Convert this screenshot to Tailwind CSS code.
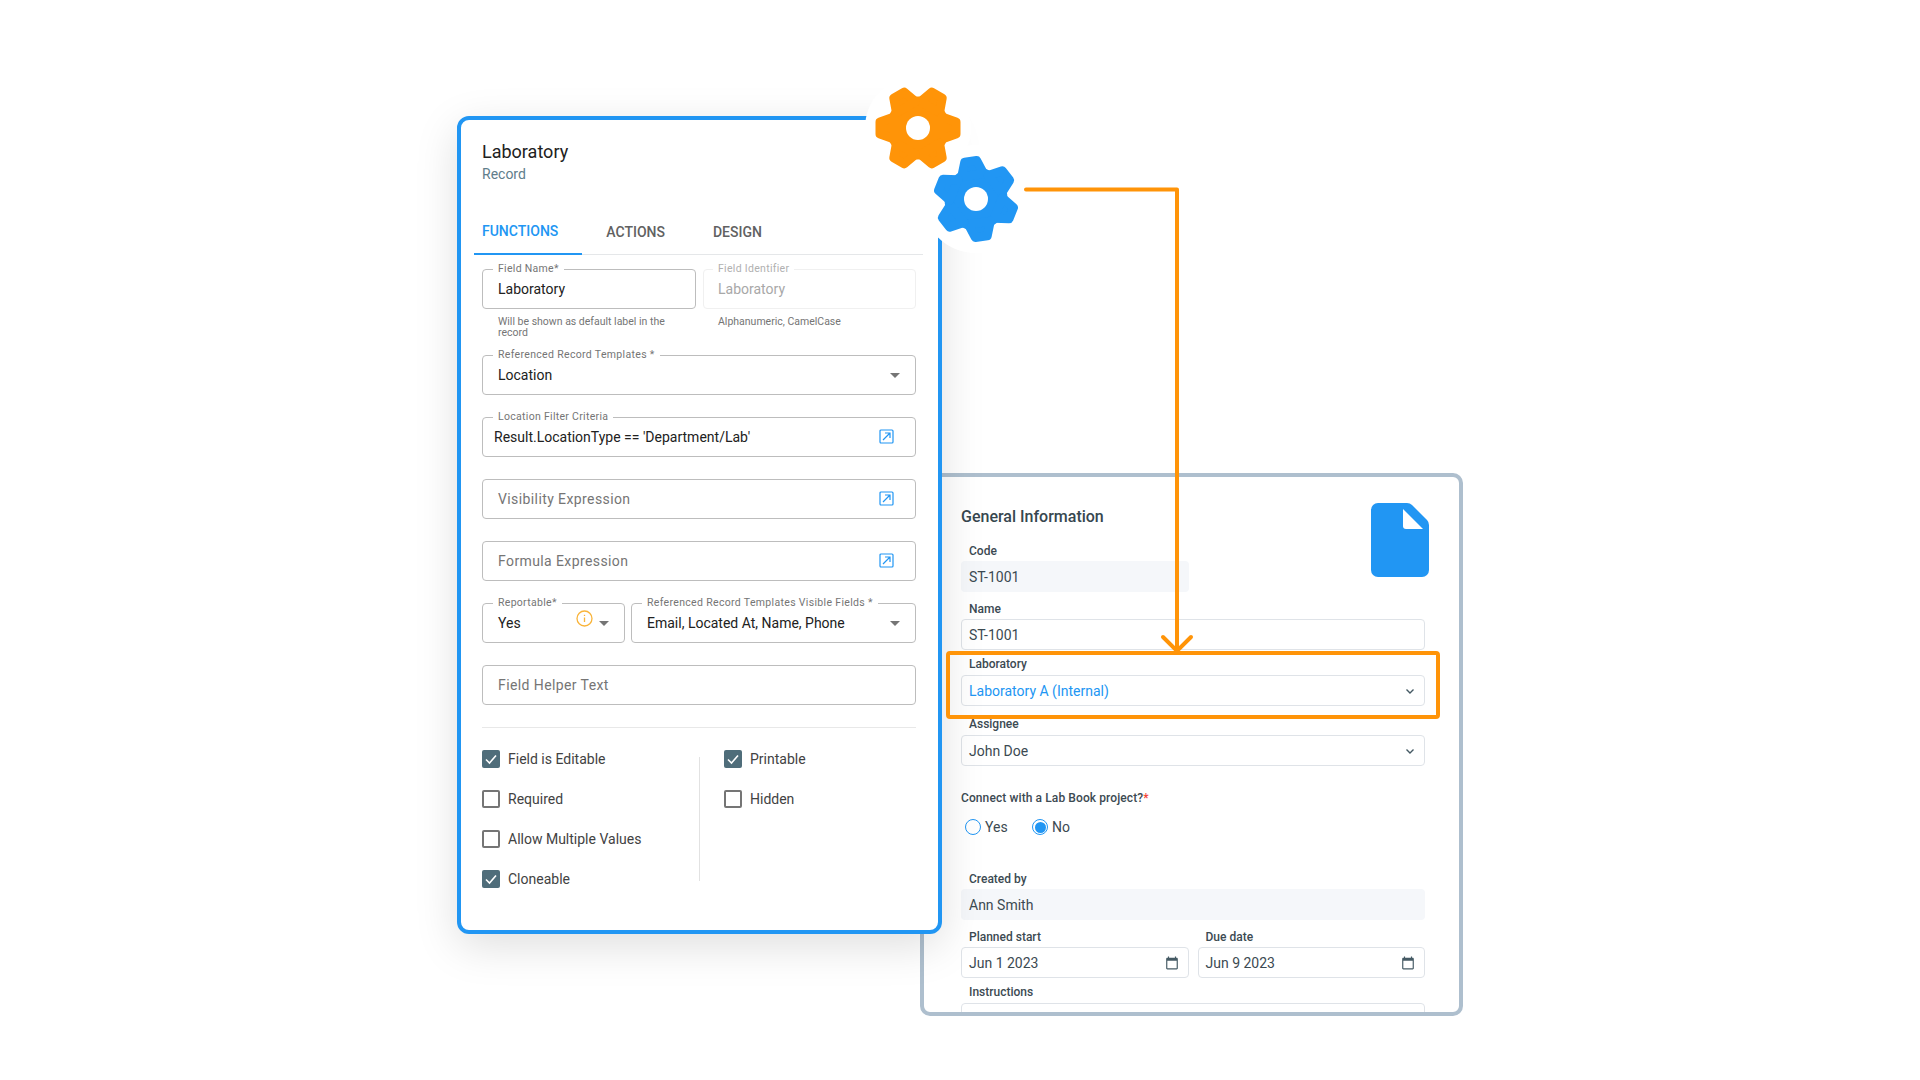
<!DOCTYPE html>
<html lang="en">
<head>
<meta charset="utf-8">
<title>Laboratory</title>
<script src="https://cdn.jsdelivr.net/npm/@tailwindcss/browser@4"></script>
</head>
<body class="bg-white">
<div class="relative w-[1920px] h-[1080px] overflow-hidden bg-white font-['Roboto',sans-serif]">

  <!-- form preview window -->
  <div class="absolute left-[920px] top-[473px] w-[543px] h-[543px] rounded-[10px] border-4 border-[#aebfce] bg-white overflow-hidden pl-[37px] pr-[34px] pt-[28px] text-[#3c4a52]">
    <svg class="absolute right-[30px] top-[26px]" width="58" height="74" viewBox="0 0 58 74">
      <path fill="#2196f3" d="M7 0H36Q39 0 41 2L56 17Q58 19 58 22V67a7 7 0 0 1-7 7H7a7 7 0 0 1-7-7V7a7 7 0 0 1 7-7z"/>
      <path fill="#fff" d="M32 6V23q0 3 3 3H52z"/>
    </svg>
    <h3 class="text-base leading-6 font-medium text-[#37474f]">General Information</h3>

    <div class="mt-[14px] pl-2 text-xs leading-4 font-medium">Code</div>
    <div class="mt-[2px] w-[228px] h-[31px] pl-2 flex items-center rounded bg-[#f5f7fa] text-sm">ST-1001</div>

    <div class="mt-[9px] pl-2 text-xs leading-4 font-medium">Name</div>
    <div class="mt-[2px] h-[31px] pl-[7px] flex items-center rounded border border-[#dfe3e8] text-sm">ST-1001</div>

    <div class="mt-[6px] pl-2 text-xs leading-4 font-medium">Laboratory</div>
    <div class="mt-[3px] h-[31px] pl-[7px] pr-2 flex items-center justify-between rounded border border-[#dfe3e8] text-sm text-[#2196f3]">
      <span>Laboratory A (Internal)</span>
      <svg width="12" height="12" viewBox="0 0 12 12" fill="none" stroke="#455a64" stroke-width="1.4"><path d="M2.5 4.5 6 8l3.5-3.5"/></svg>
    </div>

    <div class="mt-[10px] pl-2 text-xs leading-4 font-medium">Assignee</div>
    <div class="mt-[3px] h-[31px] pl-[7px] pr-2 flex items-center justify-between rounded border border-[#dfe3e8] text-sm">
      <span>John Doe</span>
      <svg width="12" height="12" viewBox="0 0 12 12" fill="none" stroke="#455a64" stroke-width="1.4"><path d="M2.5 4.5 6 8l3.5-3.5"/></svg>
    </div>

    <div class="mt-6 text-xs leading-4 font-medium tracking-[0.1px]">Connect with a Lab Book project?<span class="text-[#f44336]">*</span></div>
    <div class="mt-[11px] h-5 pl-1 flex items-center text-sm">
      <span class="w-4 h-4 rounded-full border border-[#2196f3]"></span>
      <span class="ml-1 w-[47px]">Yes</span>
      <span class="w-4 h-4 rounded-full border border-[#2196f3] flex items-center justify-center"><span class="w-[11px] h-[11px] rounded-full bg-[#2196f3]"></span></span>
      <span class="ml-1">No</span>
    </div>

    <div class="mt-[34px] pl-2 text-xs leading-4 font-medium">Created by</div>
    <div class="mt-[2px] h-[31px] pl-2 flex items-center rounded bg-[#f5f7fa] text-sm">Ann Smith</div>

    <div class="mt-[9px] grid grid-cols-2 gap-x-[9px]">
      <div>
        <div class="pl-2 text-xs leading-4 font-medium">Planned start</div>
        <div class="mt-[2px] h-[31px] pl-[7px] pr-[9px] flex items-center justify-between rounded border border-[#dfe3e8] text-sm">
          <span>Jun 1 2023</span>
          <svg width="14" height="14" viewBox="0 0 24 24" fill="#455a64"><path d="M20 3h-1V1h-2v2H7V1H5v2H4c-1.1 0-2 .9-2 2v16c0 1.1.9 2 2 2h16c1.1 0 2-.9 2-2V5c0-1.1-.9-2-2-2zm0 18H4V8h16v13z"/></svg>
        </div>
      </div>
      <div>
        <div class="pl-2 text-xs leading-4 font-medium">Due date</div>
        <div class="mt-[2px] h-[31px] pl-[7px] pr-[9px] flex items-center justify-between rounded border border-[#dfe3e8] text-sm">
          <span>Jun 9 2023</span>
          <svg width="14" height="14" viewBox="0 0 24 24" fill="#455a64"><path d="M20 3h-1V1h-2v2H7V1H5v2H4c-1.1 0-2 .9-2 2v16c0 1.1.9 2 2 2h16c1.1 0 2-.9 2-2V5c0-1.1-.9-2-2-2zm0 18H4V8h16v13z"/></svg>
        </div>
      </div>
    </div>

    <div class="mt-[6px] pl-2 text-xs leading-4 font-medium">Instructions</div>
    <div class="mt-[3px] h-[31px] rounded border border-[#dfe3e8]"></div>
  </div>

  <!-- field settings window -->
  <div class="absolute left-[457px] top-[116px] w-[485px] h-[818px] rounded-[12px] border-4 border-[#2196f3] bg-white shadow-[0_12px_44px_rgba(0,0,0,0.13)] pl-[21px] pr-[22px] pt-5 text-[#212121]">
    <h2 class="text-lg leading-6">Laboratory</h2>
    <div class="text-sm leading-5 text-[#607d8b]">Record</div>

    <div class="mt-[25px] -ml-2 -mr-[7px] h-[46px] flex border-b border-[#e5e7e9] text-sm font-medium">
      <div class="h-[46px] pl-2 pr-6 flex items-center border-b-2 border-[#2196f3] text-[#2196f3]">FUNCTIONS</div>
      <div class="h-[45px] px-6 flex items-center text-[#616161]">ACTIONS</div>
      <div class="h-[45px] px-6 flex items-center text-[#616161]">DESIGN</div>
    </div>

    <div class="mt-[14px] flex gap-[7px]">
      <div class="w-[214px]">
        <div class="relative h-10 pl-[15px] flex items-center rounded border border-[#bdbdbd] text-sm">
          Laboratory
          <span class="absolute left-[10px] -top-[7px] px-[5px] bg-white text-[10.5px] leading-3 tracking-[0.3px] text-[#757575]">Field Name*</span>
        </div>
        <p class="mt-[7px] pl-4 pr-5 text-[10.5px] leading-[11px] text-[#757575]">Will be shown as default label in the record</p>
      </div>
      <div class="w-[213px]">
        <div class="relative h-10 pl-[14px] flex items-center rounded border border-[#f0f0f0] text-sm text-[#a8a8a8]">
          Laboratory
          <span class="absolute left-[9px] -top-[7px] px-[5px] bg-white text-[10.5px] leading-3 tracking-[0.3px] text-[#b0b0b0]">Field Identifier</span>
        </div>
        <p class="mt-[7px] pl-[15px] text-[10.5px] leading-[11px] text-[#757575]">Alphanumeric, CamelCase</p>
      </div>
    </div>

    <div class="relative mt-[17px] h-10 pl-[15px] pr-[15px] flex items-center justify-between rounded border border-[#bdbdbd] text-sm">
      <span>Location</span>
      <span class="w-0 h-0 border-x-[5px] border-t-[5px] border-x-transparent border-t-[#757575]"></span>
      <span class="absolute left-[10px] -top-[7px] px-[5px] bg-white text-[10.5px] leading-3 tracking-[0.33px] text-[#757575]">Referenced Record Templates *</span>
    </div>

    <div class="relative mt-[22px] h-10 pl-[11px] pr-[21px] flex items-center justify-between rounded border border-[#bdbdbd] text-sm">
      <span>Result.LocationType == 'Department/Lab'</span>
      <svg class="mb-[2px]" width="15" height="15" viewBox="0 0 15 15" fill="none" stroke="#2196f3" stroke-width="1.2"><rect x="1" y="1" width="13" height="13" rx="1"/><path d="M4 11 11 4M6 4h5v5"/></svg>
      <span class="absolute left-[10px] -top-[7px] px-[5px] bg-white text-[10.5px] leading-3 tracking-[0.3px] text-[#757575]">Location Filter Criteria</span>
    </div>

    <div class="mt-[22px] h-10 pl-[15px] pr-[21px] flex items-center justify-between rounded border border-[#bdbdbd] text-sm tracking-[0.4px] text-[#757575]">
      <span>Visibility Expression</span>
      <svg class="mb-[2px]" width="15" height="15" viewBox="0 0 15 15" fill="none" stroke="#2196f3" stroke-width="1.2"><rect x="1" y="1" width="13" height="13" rx="1"/><path d="M4 11 11 4M6 4h5v5"/></svg>
    </div>

    <div class="mt-[22px] h-10 pl-[15px] pr-[21px] flex items-center justify-between rounded border border-[#bdbdbd] text-sm tracking-[0.4px] text-[#757575]">
      <span>Formula Expression</span>
      <svg class="mb-[2px]" width="15" height="15" viewBox="0 0 15 15" fill="none" stroke="#2196f3" stroke-width="1.2"><rect x="1" y="1" width="13" height="13" rx="1"/><path d="M4 11 11 4M6 4h5v5"/></svg>
    </div>

    <div class="mt-[22px] flex gap-[6px]">
      <div class="relative w-[143px] h-10 pl-[15px] pr-[15px] flex items-center rounded border border-[#bdbdbd] text-sm">
        <span class="flex-1">Yes</span>
        <svg class="mb-[10px] mr-[6px]" width="17" height="17" viewBox="0 0 17 17" fill="none" stroke="#f9b43a" stroke-width="1.3"><circle cx="8.5" cy="8.5" r="7.5"/><path d="M8.5 7.5V12M8.5 4.7v1.2"/></svg>
        <span class="w-0 h-0 border-x-[5px] border-t-[5px] border-x-transparent border-t-[#757575]"></span>
        <span class="absolute left-[10px] -top-[7px] px-[5px] bg-white text-[10.5px] leading-3 tracking-[0.3px] text-[#757575]">Reportable*</span>
      </div>
      <div class="relative flex-1 h-10 pl-[15px] pr-[15px] flex items-center justify-between rounded border border-[#bdbdbd] text-sm">
        <span>Email, Located At, Name, Phone</span>
        <span class="w-0 h-0 border-x-[5px] border-t-[5px] border-x-transparent border-t-[#757575]"></span>
        <span class="absolute left-[10px] -top-[7px] px-[5px] bg-white text-[10.5px] leading-3 tracking-[0.33px] text-[#757575] whitespace-nowrap">Referenced Record Templates Visible Fields *</span>
      </div>
    </div>

    <div class="mt-[22px] h-10 pl-[15px] flex items-center rounded border border-[#bdbdbd] text-sm tracking-[0.4px] text-[#757575]">Field Helper Text</div>

    <div class="mt-[22px] border-t border-[#e8e8e8]"></div>

    <div class="mt-[22px] flex text-sm text-[#424242]">
      <div class="w-[217px] flex flex-col gap-[22px]">
        <label class="h-[18px] flex items-center gap-2">
          <span class="w-[18px] h-[18px] rounded-[2px] bg-[#4f6d7a] flex items-center justify-center"><svg width="14" height="14" viewBox="0 0 14 14" fill="none" stroke="#fff" stroke-width="1.6"><path d="M2 7.5 5.5 11 12 3.5"/></svg></span>
          Field is Editable
        </label>
        <label class="h-[18px] flex items-center gap-2">
          <span class="w-[18px] h-[18px] rounded-[2px] border-2 border-[#757575]"></span>
          Required
        </label>
        <label class="h-[18px] flex items-center gap-2">
          <span class="w-[18px] h-[18px] rounded-[2px] border-2 border-[#757575]"></span>
          Allow Multiple Values
        </label>
        <label class="h-[18px] flex items-center gap-2">
          <span class="w-[18px] h-[18px] rounded-[2px] bg-[#4f6d7a] flex items-center justify-center"><svg width="14" height="14" viewBox="0 0 14 14" fill="none" stroke="#fff" stroke-width="1.6"><path d="M2 7.5 5.5 11 12 3.5"/></svg></span>
          Cloneable
        </label>
      </div>
      <div class="w-px my-[7px] bg-[#e2e2e2]"></div>
      <div class="pl-6 flex flex-col gap-[22px]">
        <label class="h-[18px] flex items-center gap-2">
          <span class="w-[18px] h-[18px] rounded-[2px] bg-[#4f6d7a] flex items-center justify-center"><svg width="14" height="14" viewBox="0 0 14 14" fill="none" stroke="#fff" stroke-width="1.6"><path d="M2 7.5 5.5 11 12 3.5"/></svg></span>
          Printable
        </label>
        <label class="h-[18px] flex items-center gap-2">
          <span class="w-[18px] h-[18px] rounded-[2px] border-2 border-[#757575]"></span>
          Hidden
        </label>
      </div>
    </div>
  </div>

  <!-- gears, connector arrow and highlight drawn over both windows -->
  <svg class="absolute inset-0" width="1920" height="1080" viewBox="0 0 1920 1080" fill="none">
    <circle cx="918" cy="128" r="53" fill="#fff"/>
    <circle cx="976" cy="199" r="54" fill="#fff"/>

    <g transform="translate(918 128) rotate(30)" fill="#ff9408" stroke="#ff9408" stroke-width="9" stroke-linejoin="round">
      <circle r="27"/>
      <path d="M-11-24-6-38H6L11-24z"/>
      <path transform="rotate(60)" d="M-11-24-6-38H6L11-24z"/>
      <path transform="rotate(120)" d="M-11-24-6-38H6L11-24z"/>
      <path transform="rotate(180)" d="M-11-24-6-38H6L11-24z"/>
      <path transform="rotate(240)" d="M-11-24-6-38H6L11-24z"/>
      <path transform="rotate(300)" d="M-11-24-6-38H6L11-24z"/>
    </g>
    <circle cx="918" cy="128" r="12" fill="#fff"/>

    <g transform="translate(976 199) rotate(-8)" fill="#2196f3" stroke="#2196f3" stroke-width="9" stroke-linejoin="round">
      <circle r="27"/>
      <path d="M-11-24-6-38H6L11-24z"/>
      <path transform="rotate(60)" d="M-11-24-6-38H6L11-24z"/>
      <path transform="rotate(120)" d="M-11-24-6-38H6L11-24z"/>
      <path transform="rotate(180)" d="M-11-24-6-38H6L11-24z"/>
      <path transform="rotate(240)" d="M-11-24-6-38H6L11-24z"/>
      <path transform="rotate(300)" d="M-11-24-6-38H6L11-24z"/>
    </g>
    <circle cx="976" cy="199" r="12" fill="#fff"/>

    <path d="M1026 189.5H1177V651" stroke="#ff9408" stroke-width="4" stroke-linecap="round" stroke-linejoin="round"/>
    <path d="M1163 637 1177 651 1191 637" stroke="#ff9408" stroke-width="4" stroke-linecap="round"/>
    <rect x="948" y="653" width="490" height="64" rx="2" stroke="#ff9408" stroke-width="4"/>
  </svg>
</div>
</body>
</html>
